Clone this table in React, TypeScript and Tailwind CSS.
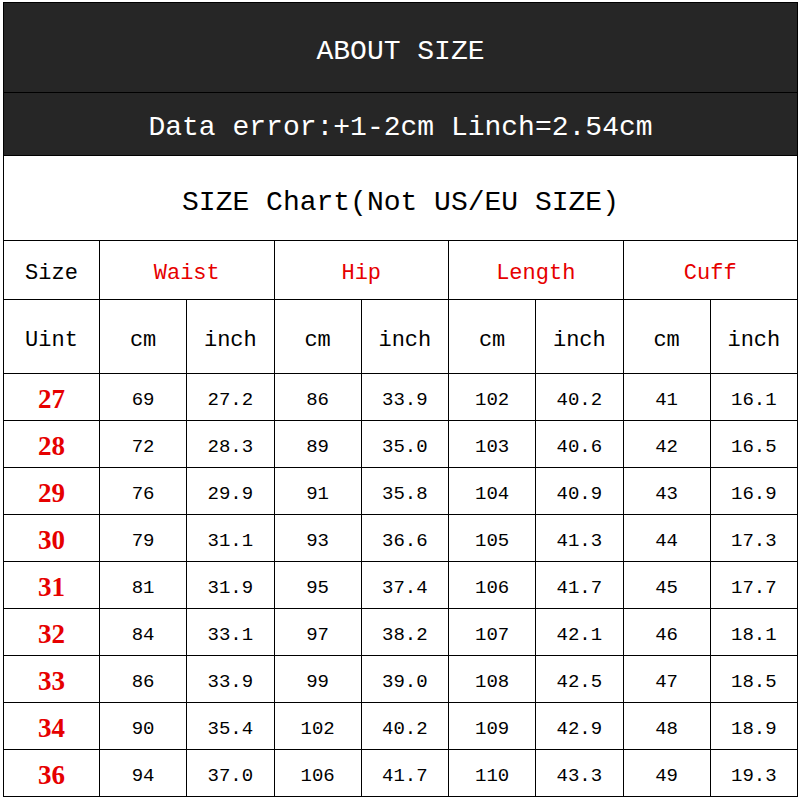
import React from "react";

const rows = [
  ["27", "69", "27.2", "86", "33.9", "102", "40.2", "41", "16.1"],
  ["28", "72", "28.3", "89", "35.0", "103", "40.6", "42", "16.5"],
  ["29", "76", "29.9", "91", "35.8", "104", "40.9", "43", "16.9"],
  ["30", "79", "31.1", "93", "36.6", "105", "41.3", "44", "17.3"],
  ["31", "81", "31.9", "95", "37.4", "106", "41.7", "45", "17.7"],
  ["32", "84", "33.1", "97", "38.2", "107", "42.1", "46", "18.1"],
  ["33", "86", "33.9", "99", "39.0", "108", "42.5", "47", "18.5"],
  ["34", "90", "35.4", "102", "40.2", "109", "42.9", "48", "18.9"],
  ["36", "94", "37.0", "106", "41.7", "110", "43.3", "49", "19.3"],
];

const groups = ["Waist", "Hip", "Length", "Cuff"];

const mono = { fontFamily: '"Liberation Mono", "DejaVu Sans Mono", monospace' };

const App = () => {
  return (
    <div className="w-[800px] h-[800px] bg-white pt-[2px] pl-[3px]">
      <table
        className="table-fixed border-collapse w-[794px] text-black"
        style={mono}
      >
        <colgroup>
          <col className="w-[96px]" />
          {Array.from({ length: 8 }).map((_, i) => (
            <col key={i} className="w-[87.25px]" />
          ))}
        </colgroup>
        <tbody>
          {/* Title bars */}
          <tr className="h-[90px]">
            <td
              colSpan={9}
              className="bg-[#262626] border border-black text-center text-white text-[28px] pt-[8px]"
            >
              ABOUT SIZE
            </td>
          </tr>
          <tr className="h-[63px]">
            <td
              colSpan={9}
              className="bg-[#262626] border border-black text-center text-white text-[28px] pt-[8px]"
            >
              Data error:+1-2cm Linch=2.54cm
            </td>
          </tr>
          <tr className="h-[85px]">
            <td
              colSpan={9}
              className="border border-black text-center text-[28px] pt-[10px]"
            >
              SIZE Chart(Not US/EU SIZE)
            </td>
          </tr>

          {/* Header rows */}
          <tr className="h-[59px]">
            <td className="border border-black text-center text-[22px] pt-[7px]">Size</td>
            {groups.map((g) => (
              <td
                key={g}
                colSpan={2}
                className="border border-black text-center text-[22px] text-[#e60000] pt-[7px]"
              >
                {g}
              </td>
            ))}
          </tr>
          <tr className="h-[74px]">
            <td className="border border-black text-center text-[22px] pt-[7px]">Uint</td>
            {groups.map((g) => (
              <React.Fragment key={g}>
                <td className="border border-black text-center text-[22px] pt-[7px]">cm</td>
                <td className="border border-black text-center text-[22px] pt-[7px]">inch</td>
              </React.Fragment>
            ))}
          </tr>

          {/* Data */}
          {rows.map((r) => (
            <tr key={r[0]} className="h-[47px]">
              <td
                className="border border-black text-center text-[27px] font-bold text-[#e60000] pt-[4px]"
                style={{ fontFamily: '"Liberation Serif", "DejaVu Serif", serif' }}
              >
                {r[0]}
              </td>
              {r.slice(1).map((v, i) => (
                <td key={i} className="border border-black text-center text-[19px] pt-[6px]">
                  {v}
                </td>
              ))}
            </tr>
          ))}
        </tbody>
      </table>
    </div>
  );
};

export default App;
